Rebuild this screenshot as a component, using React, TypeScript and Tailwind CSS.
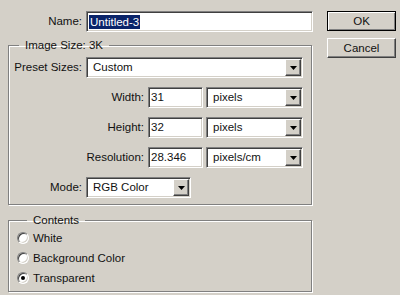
import React from 'react';

const sunken =
  'border border-t-[#808080] border-l-[#808080] border-b-white border-r-white shadow-[inset_1px_1px_0_#404040,inset_-1px_-1px_0_#d4d0c8] bg-white';
const raised =
  'border border-t-white border-l-white border-b-[#404040] border-r-[#404040] shadow-[inset_-1px_-1px_0_#808080] bg-[#d4d0c8]';
const etched =
  'border border-[#808080] shadow-[inset_1px_1px_0_#fff,1px_1px_0_#fff]';

const TextBox = ({ value, className }: { value: string; className: string }) => (
  <div className={`${sunken} ${className} h-[21px] flex items-center pl-[2px]`}>
    <span>{value}</span>
  </div>
);

const Select = ({ value, className }: { value: string; className: string }) => (
  <div className={`${sunken} ${className} h-[21px] flex items-center p-[1px]`}>
    <span className="flex-1 pl-[5px]">{value}</span>
    <div className={`${raised} w-[16px] h-full flex items-center justify-center`}>
      <svg width="7" height="4" viewBox="0 0 7 4">
        <path d="M0 0h7L3.5 4z" fill="#000" />
      </svg>
    </div>
  </div>
);

const Radio = ({ label, checked }: { label: string; checked?: boolean }) => (
  <div className="flex items-center h-[20px] gap-[4px]">
    <div className="w-[12px] h-[12px] rounded-full border border-t-[#808080] border-l-[#808080] border-b-white border-r-white shadow-[inset_1px_1px_0_#404040,inset_-1px_-1px_0_#d4d0c8] bg-white flex items-center justify-center">
      {checked && <div className="w-[4px] h-[4px] rounded-full bg-black" />}
    </div>
    <span>{label}</span>
  </div>
);

const Row = ({ label, labelW, children }: { label: string; labelW: string; children: React.ReactNode }) => (
  <div className="flex items-center h-[21px]">
    <span className={`${labelW} text-right mr-[4px]`}>{label}</span>
    {children}
  </div>
);

export default function App() {
  return (
    <div className="w-[400px] h-[295px] bg-[#d4d0c8] flex pt-[11px] text-[11.5px] leading-[13px] text-[#111] font-['Liberation_Sans',Arial,sans-serif]">
      <div className="ml-[8px] w-[305px] flex flex-col">
        <div className="flex items-center h-[21px]">
          <span className="w-[74px] text-right mr-[4px]">Name:</span>
          <div className={`${sunken} w-[227px] h-[21px] flex items-center pl-[2px]`}>
            <span className="bg-[#0a246a] text-white px-[1px] leading-[14px]">Untitled-3</span>
          </div>
        </div>

        <fieldset className={`${etched} w-[304px] mt-[7px] pt-[5px] pb-[6px] flex flex-col gap-[9px]`}>
          <legend className="ml-[10px] px-[6px]">Image Size: 3K</legend>
          <Row label="Preset Sizes:" labelW="w-[73px]">
            <Select value="Custom" className="w-[217px]" />
          </Row>
          <Row label="Width:" labelW="w-[135px]">
            <TextBox value="31" className="w-[55px]" />
            <Select value="pixels" className="w-[97px] ml-[3px]" />
          </Row>
          <Row label="Height:" labelW="w-[135px]">
            <TextBox value="32" className="w-[55px]" />
            <Select value="pixels" className="w-[97px] ml-[3px]" />
          </Row>
          <Row label="Resolution:" labelW="w-[135px]">
            <TextBox value="28.346" className="w-[55px]" />
            <Select value="pixels/cm" className="w-[97px] ml-[3px]" />
          </Row>
          <Row label="Mode:" labelW="w-[73px]">
            <Select value="RGB Color" className="w-[105px]" />
          </Row>
        </fieldset>

        <fieldset className={`${etched} w-[304px] mt-[9px] pt-[1px] pb-[3px] pl-[8px]`}>
          <legend className="ml-[10px] px-[6px]">Contents</legend>
          <Radio label="White" />
          <Radio label="Background Color" />
          <Radio label="Transparent" checked />
        </fieldset>
      </div>

      <div className="ml-[14px] w-[69px] flex flex-col gap-[7px]">
        <button className="h-[20px] border border-black shadow-[inset_1px_1px_0_#fff,inset_-1px_-1px_0_#808080] bg-[#d4d0c8]">
          OK
        </button>
        <button className={`${raised} h-[20px]`}>Cancel</button>
      </div>
    </div>
  );
}
